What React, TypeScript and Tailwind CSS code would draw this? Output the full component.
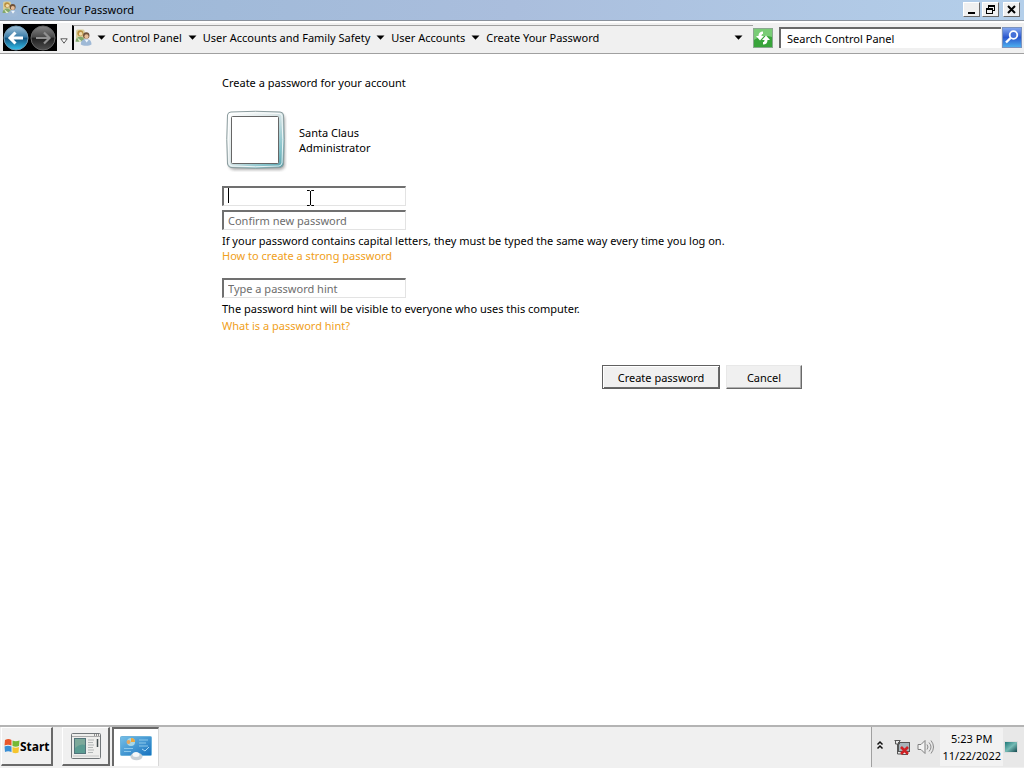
import React from "react";

const raised =
  "border border-t-white border-l-white border-r-[#696969] border-b-[#696969] bg-[#f0f0f0]";

function UsersIcon({ className }: { className: string }) {
  return (
    <svg viewBox="0 0 16 16" className={className} aria-hidden="true">
      <rect x="1" y="0.5" width="8" height="10" rx="1.5" fill="#d9cf9c" />
      <circle cx="5" cy="4" r="2.8" fill="#b98f3f" />
      <circle cx="5.4" cy="4.6" r="1.7" fill="#f2dcae" />
      <path d="M0.5 12c0-3 2-4.600 4.500-4.600s4 1.600 4 4.600z" fill="#83a86c" />
      <path d="M2 8l2 4h3z" fill="#e4ecc8" />
      <circle cx="10.600" cy="6" r="3" fill="#6f5139" />
      <circle cx="10.800" cy="7" r="2" fill="#e7bd98" />
      <path d="M5.500 14.500c0-3.500 2-5 5-5s5 1.500 5 5c-2 1.700-8 1.700-10 0z" fill="#9fb9d6" />
      <path d="M9 9.800l2 3 2-3z" fill="#f1f6fb" />
    </svg>
  );
}

function DownArrow() {
  return (
    <svg viewBox="0 0 9 5" className="h-[5px] w-[9px] shrink-0" aria-hidden="true">
      <path d="M0.500 0.500h8L4.500 4.800z" fill="#000" />
    </svg>
  );
}

function NavOrb({ forward = false }: { forward?: boolean }) {
  const id = forward ? "orb-forward" : "orb-back";
  return (
    <svg viewBox="0 0 26 26" className="h-[26px] w-[26px]" aria-hidden="true">
      <defs>
        <linearGradient id={id} x1="0" y1="0" x2="0" y2="1">
          <stop offset="0" stopColor={forward ? "#858585" : "#a5c4da"} />
          <stop offset="0.45" stopColor={forward ? "#4b4b4b" : "#3c7ea9"} />
          <stop offset="0.52" stopColor={forward ? "#202020" : "#135580"} />
          <stop offset="1" stopColor={forward ? "#505050" : "#35c2ee"} />
        </linearGradient>
      </defs>
      <circle cx="13" cy="13" r="12" fill={`url(#${id})`} stroke={forward ? "#666" : "#6f98b2"} />
      <path
        d={forward ? "M6 13h13M14 7.500l5.500 5.500-5.500 5.500" : "M20 13H8M12.500 7.500L7 13l5.500 5.500"}
        fill="none"
        stroke={forward ? "#909090" : "#fff"}
        strokeWidth={forward ? 2.2 : 3}
      />
    </svg>
  );
}

function TitleBar() {
  const control = `${raised} flex h-[15px] w-[17px] items-center justify-center`;
  return (
    <header className="flex h-5 items-center bg-linear-to-r from-[#9ab7d6] via-[#aabedd] to-[#b4cfea] pr-1 pb-0.5 pl-0.5">
      <UsersIcon className="h-4 w-4" />
      <h1 className="ml-[3px] flex-1">Create Your Password</h1>
      <button type="button" aria-label="Minimize" className={control}>
        <svg viewBox="0 0 13 11" className="h-[11px] w-[13px]">
          <path d="M3 8h7v2H3z" />
        </svg>
      </button>
      <button type="button" aria-label="Restore" className={`${control} ml-0.5`}>
        <svg viewBox="0 0 13 11" className="h-[11px] w-[13px]">
          <path d="M4 1h7v6H9V6h1V3H5v1H4zM2 4h7v6H2zM3 6v3h5V6z" fillRule="evenodd" />
        </svg>
      </button>
      <button type="button" aria-label="Close" className={`${control} ml-1`}>
        <svg viewBox="0 0 13 11" className="h-[11px] w-[13px]">
          <path d="M3 2l7 7M10 2L3 9" stroke="#000" strokeWidth="2" />
        </svg>
      </button>
    </header>
  );
}

const crumbs = ["Control Panel", "User Accounts and Family Safety", "User Accounts", "Create Your Password"];

function AddressBar() {
  return (
    <div className="flex h-[34px] items-center border-t border-b border-t-[#8a929c] border-b-[#a0a0a0] bg-[#f0f0f0] pt-px pr-0.5 pl-[3px] shadow-[inset_0_2px_0_#fff]">
      <div className="flex h-[27px] items-center bg-black">
        <button type="button" aria-label="Back" className="w-[27px]">
          <NavOrb />
        </button>
        <button type="button" aria-label="Forward" className="w-[27px]">
          <NavOrb forward />
        </button>
      </div>
      <button type="button" aria-label="Recent pages" className="ml-[3px] flex h-5 w-2 items-end pb-1">
        <svg viewBox="0 0 8 6" className="h-[6px] w-2">
          <path d="M0.800 0.800h6.400L4 5.200z" fill="#fff" stroke="#333" strokeWidth="0.8" />
        </svg>
      </button>
      <nav
        aria-label="Location"
        className="ml-1 flex h-[25px] min-w-0 flex-1 items-center border-t border-l-2 border-t-[#a0a0a0] border-l-black pr-[10px] pb-0.5 pl-px"
      >
        <UsersIcon className="mr-[5px] h-[17px] w-[17px] shrink-0" />
        <ol className="flex flex-1 items-center whitespace-nowrap">
          {crumbs.map((crumb) => (
            <li key={crumb} className="flex items-center">
              <DownArrow />
              <a href="#" className="mx-1.5">
                {crumb}
              </a>
            </li>
          ))}
        </ol>
        <button type="button" aria-label="Previous locations">
          <DownArrow />
        </button>
      </nav>
      <button type="button" aria-label="Refresh" className="h-5 w-5">
        <svg viewBox="0 0 20 20" className="h-5 w-5">
          <rect x="0.500" y="0.500" width="19" height="19" fill="#38a43a" stroke="#8aa890" />
          <path d="M1 1h18v8C12 7 7 8 1 12z" fill="#79cc76" />
          <path d="M10 3.500C7 3.500 5.500 5 5.500 8H3l4 4.500L11 8H8.500c0-1.500.5-2 1.500-2z" fill="#fff" />
          <path d="M10 16.500c3 0 4.500-1.500 4.500-4.500H17l-4-4.500L9 12h2.500c0 1.500-.5 2-1.500 2z" fill="#fff" />
        </svg>
      </button>
      <input
        id="search"
        type="search"
        aria-label="Search Control Panel"
        placeholder="Search Control Panel"
        className="ml-1.5 h-[21px] w-[222px] border-t-2 border-l-2 border-t-[#696969] border-l-[#696969] bg-white px-1.5 placeholder:text-black"
      />
      <button type="button" aria-label="Search" className="ml-px h-[21px] w-5">
        <svg viewBox="0 0 20 21" className="h-[21px] w-5">
          <defs>
            <linearGradient id="search-fill" x1="0" y1="0" x2="0" y2="1">
              <stop offset="0" stopColor="#86aaf0" />
              <stop offset="0.5" stopColor="#2b57cd" />
              <stop offset="1" stopColor="#4fb3f0" />
            </linearGradient>
          </defs>
          <rect x="0.500" y="0.500" width="19" height="20" fill="url(#search-fill)" stroke="#7b93c0" />
          <circle cx="11.500" cy="8" r="3.800" fill="#4570d8" stroke="#fff" strokeWidth="1.800" />
          <path d="M8.500 11l-4.500 4.500" stroke="#fff" strokeWidth="2.400" />
        </svg>
      </button>
    </div>
  );
}

function Field({ id, label, type, placeholder }: { id: string; label: string; type: string; placeholder?: string }) {
  return (
    <input
      id={id}
      type={type}
      aria-label={label}
      placeholder={placeholder}
      className="block h-5 w-[184px] border border-t-2 border-l-2 border-t-[#707070] border-r-[#e3e3e3] border-b-[#e3e3e3] border-l-[#707070] bg-white px-1 outline-none placeholder:text-[#6d6d6d]"
    />
  );
}

function AccountPicture() {
  return (
    <svg viewBox="0 0 64 64" className="h-16 w-16" aria-hidden="true">
      <defs>
        <linearGradient id="frame" x1="0" y1="0" x2="1" y2="1">
          <stop offset="0" stopColor="#ffffff" />
          <stop offset="0.45" stopColor="#dce6e7" />
          <stop offset="0.8" stopColor="#86c3cb" />
          <stop offset="1" stopColor="#4f9ba6" />
        </linearGradient>
        <filter id="soft" x="-20%" y="-20%" width="140%" height="140%">
          <feGaussianBlur stdDeviation="1.500" />
        </filter>
      </defs>
      <rect x="6" y="6" width="56" height="56" rx="5" fill="#777" opacity="0.6" filter="url(#soft)" />
      <path d="M8 4q24.500-1.500 49 0q3 0 3.500 3q1.500 24.500 0 49q-.5 3-3.500 3.500q-24.500 1.500-49 0q-3-.5-3.500-3.500q-1.500-24.500 0-49q.5-3 3.500-3z" fill="url(#frame)" stroke="#8b9c9e" />
      <path d="M9 5.500q23.500-1.500 47 0q2.500 0 3 2.500q1.500 23.500 0 47q-.5 2.500-3 3q-23.500 1.500-47 0q-2.500-.5-3-3q-1.500-23.500 0-47q.5-2.500 3-2.500z" fill="none" stroke="#fff" opacity="0.8" />
      <rect x="8.500" y="8.500" width="47" height="47" rx="1" fill="#fff" stroke="#666" />
    </svg>
  );
}

function PasswordForm() {
  return (
    <form className="ml-[222px] w-[580px] pt-[21px]" onSubmit={(e) => e.preventDefault()}>
      <h2>Create a password for your account</h2>
      <div className="mt-[18px] ml-px flex items-center">
        <AccountPicture />
        <div className="ml-3">
          <p>Santa Claus</p>
          <p>Administrator</p>
        </div>
      </div>
      <div className="relative mt-[14px]">
        <Field id="password" label="New password" type="password" />
        <span className="absolute top-0.5 left-1.5 h-[15px] w-px bg-black" />
        <svg viewBox="0 0 7 16" className="absolute top-1 left-[85px] h-4 w-[7px]" aria-hidden="true">
          <path d="M0 .5h2.500l1 1 1-1H7M3.500 1v14M0 15.500h2.500l1-1 1 1H7" fill="none" stroke="#000" />
        </svg>
      </div>
      <div className="mt-1">
        <Field id="confirm" label="Confirm new password" type="password" placeholder="Confirm new password" />
      </div>
      <p className="mt-[3px] whitespace-nowrap">
        If your password contains capital letters, they must be typed the same way every time you log on.
      </p>
      <a href="#" className="block w-fit text-[#f0a020]">
        How to create a strong password
      </a>
      <div className="mt-[15px]">
        <Field id="hint" label="Password hint" type="text" placeholder="Type a password hint" />
      </div>
      <p className="mt-[3px]">The password hint will be visible to everyone who uses this computer.</p>
      <a href="#" className="mt-0.5 block w-fit text-[#f0a020]">
        What is a password hint?
      </a>
      <div className="mt-8 flex justify-end gap-1.5">
        <button
          type="submit"
          className="h-6 w-[118px] border border-[#606060] bg-[#f0f0f0] shadow-[inset_1px_1px_0_#fff,inset_-1px_-1px_0_#696969]"
        >
          Create password
        </button>
        <button type="button" className="h-6 w-[76px] border border-t-[#e8e8e8] border-r-[#696969] border-b-[#696969] border-l-[#e8e8e8] bg-[#f0f0f0] shadow-[inset_-1px_-1px_0_#b0b0b0]">
          Cancel
        </button>
      </div>
    </form>
  );
}

function Taskbar() {
  return (
    <footer className="flex h-[43px] items-start border-t-2 border-[#b4b4b4] bg-[#f0f0f0]">
      <button type="button" className={`${raised} ml-px flex h-[39px] w-[52px] items-center border-r-2 border-b-2 pl-0.5 text-[12px] font-bold`}>
        <svg viewBox="0 0 16 16" className="h-4 w-4 shrink-0" aria-hidden="true">
          <path d="M1 2q3.500-2 6.500 0v5.500q-3.500-1.500-7 0z" fill="#e9572b" />
          <path d="M8.500 2.500q3 1.500 7 0L15 8q-3.500 1.500-6.500 0z" fill="#75b935" />
          <path d="M.5 8.500q3.500-1.500 7 0V14q-3.500-1.500-6.500 0z" fill="#398fd5" />
          <path d="M8.500 9q3 1.500 6.500 0l-.5 5.500q-3 1.500-6 0z" fill="#f5c52d" />
        </svg>
        <span>Start</span>
      </button>
      <button type="button" aria-label="Server Manager" className={`${raised} ml-[9px] flex h-[39px] w-12 items-center justify-center border-r-2 border-b-2`}>
        <svg viewBox="0 0 30 26" className="h-[26px] w-[30px]">
          <rect x="0.500" y="0.500" width="29" height="25" rx="1" fill="#eeeeec" stroke="#72777a" />
          <path d="M1 3.500h28" stroke="#aaa" />
          <path d="M23 2h1M25 2h1M27 2h1" stroke="#333" />
          <rect x="3.500" y="5.500" width="11" height="15" fill="#5b9c92" stroke="#52747b" />
          <path d="M4 6h10v6q-5-2-10 3z" fill="#7da99a" />
          <path d="M17 7h6M17 9.500h5M17 12h6M17 14.500h5M17 17h6M17 19.500h5" stroke="#b2b6b6" />
          <path d="M26.500 6v8" stroke="#404b4d" strokeWidth="1.500" />
          <path d="M2 23h26" stroke="#c6c6c6" />
        </svg>
      </button>
      <button type="button" aria-label="Control Panel" className="ml-0.5 flex h-[39px] w-[47px] items-center justify-center border-t-2 border-r border-l-2 border-t-[#696969] border-r-[#d8d8d8] border-l-[#696969] bg-white">
        <svg viewBox="0 0 32 26" className="h-[26px] w-8">
          <defs>
            <linearGradient id="panel" x1="0" y1="0" x2="1" y2="1">
              <stop offset="0" stopColor="#75bfe7" />
              <stop offset="1" stopColor="#1671be" />
            </linearGradient>
          </defs>
          <rect x="0.500" y="1.500" width="31" height="19" rx="1" fill="url(#panel)" stroke="#6db3dc" />
          <circle cx="11" cy="7" r="4" fill="#a7d7e8" />
          <path d="M11 7V3a4 4 0 0 1 4 4z" fill="#efa83b" />
          <circle cx="8.500" cy="7" r="2" fill="#e6a75d" />
          <path d="M19 5h9M19 8h7M19 11h9M4 13.500h9M4 16.500h7" stroke="#8cc8ea" />
          <path d="M22 14l3 2 4-4" fill="none" stroke="#a9d9f4" />
          <ellipse cx="16.500" cy="21.500" rx="6" ry="3.800" fill="#c7d0d6" />
          <ellipse cx="16" cy="19.500" rx="3.500" ry="2.500" fill="#f4f7f8" />
        </svg>
      </button>
      <div className="ml-auto flex h-10 items-center border-l border-[#a0a0a0] bg-[#e8e8e8] pr-1.5 pl-1">
        <button type="button" aria-label="Show hidden icons" className="mb-1 w-2">
          <svg viewBox="0 0 8 10" className="h-[10px] w-2">
            <path d="M1.500 4.500L4 2l2.500 2.500M1.500 8.500L4 6l2.500 2.500" fill="none" stroke="#111" strokeWidth="1.500" />
          </svg>
        </button>
        <svg viewBox="0 0 16 17" className="ml-[10px] h-[17px] w-4" role="img" aria-label="Network disconnected">
          <rect x="4.500" y="3.500" width="11" height="9" fill="#a8b4ba" stroke="#555" />
          <path d="M1.500 1v4h4V1M3.500 5v10h5M0.500 1.500h6M8 15.500h6" fill="none" stroke="#555" />
          <path d="M7 8l7 7M14 8l-7 7" stroke="#cf2024" strokeWidth="2.600" />
        </svg>
        <svg viewBox="0 0 17 16" className="ml-[7px] h-4 w-[17px]" role="img" aria-label="Volume">
          <path d="M1 5.500h3l4-4v13l-4-4H1z" fill="#f4f4f4" stroke="#808080" />
          <path d="M10 5.500q2 2.500 0 5M12 3.500q4 4.500 0 9M14 1.500q5 6.500 0 13" fill="none" stroke="#8a8a8a" />
        </svg>
        <time dateTime="2022-11-22T17:23" className="ml-1.5 bg-[#f2f2f2] px-0.5 py-0.5 text-center leading-[17px]">
          5:23 PM
          <br />
          11/22/2022
        </time>
        <svg viewBox="0 0 14 14" className="ml-px h-[14px] w-[14px]" aria-hidden="true">
          <defs>
            <linearGradient id="desktop" x1="0" y1="0" x2="1" y2="1">
              <stop offset="0" stopColor="#1e7777" />
              <stop offset="0.5" stopColor="#75bbb5" />
              <stop offset="1" stopColor="#13484e" />
            </linearGradient>
          </defs>
          <rect y="1" width="14" height="12" fill="#ddd" />
          <rect x="1" y="2" width="12" height="10" fill="url(#desktop)" />
        </svg>
      </div>
    </footer>
  );
}

export default function App() {
  return (
    <div className="flex min-h-screen flex-col bg-white font-['Noto_Sans',sans-serif] text-[11px] leading-[15px] text-black">
      <TitleBar />
      <AddressBar />
      <main className="flex-1">
        <PasswordForm />
      </main>
      <Taskbar />
    </div>
  );
}
